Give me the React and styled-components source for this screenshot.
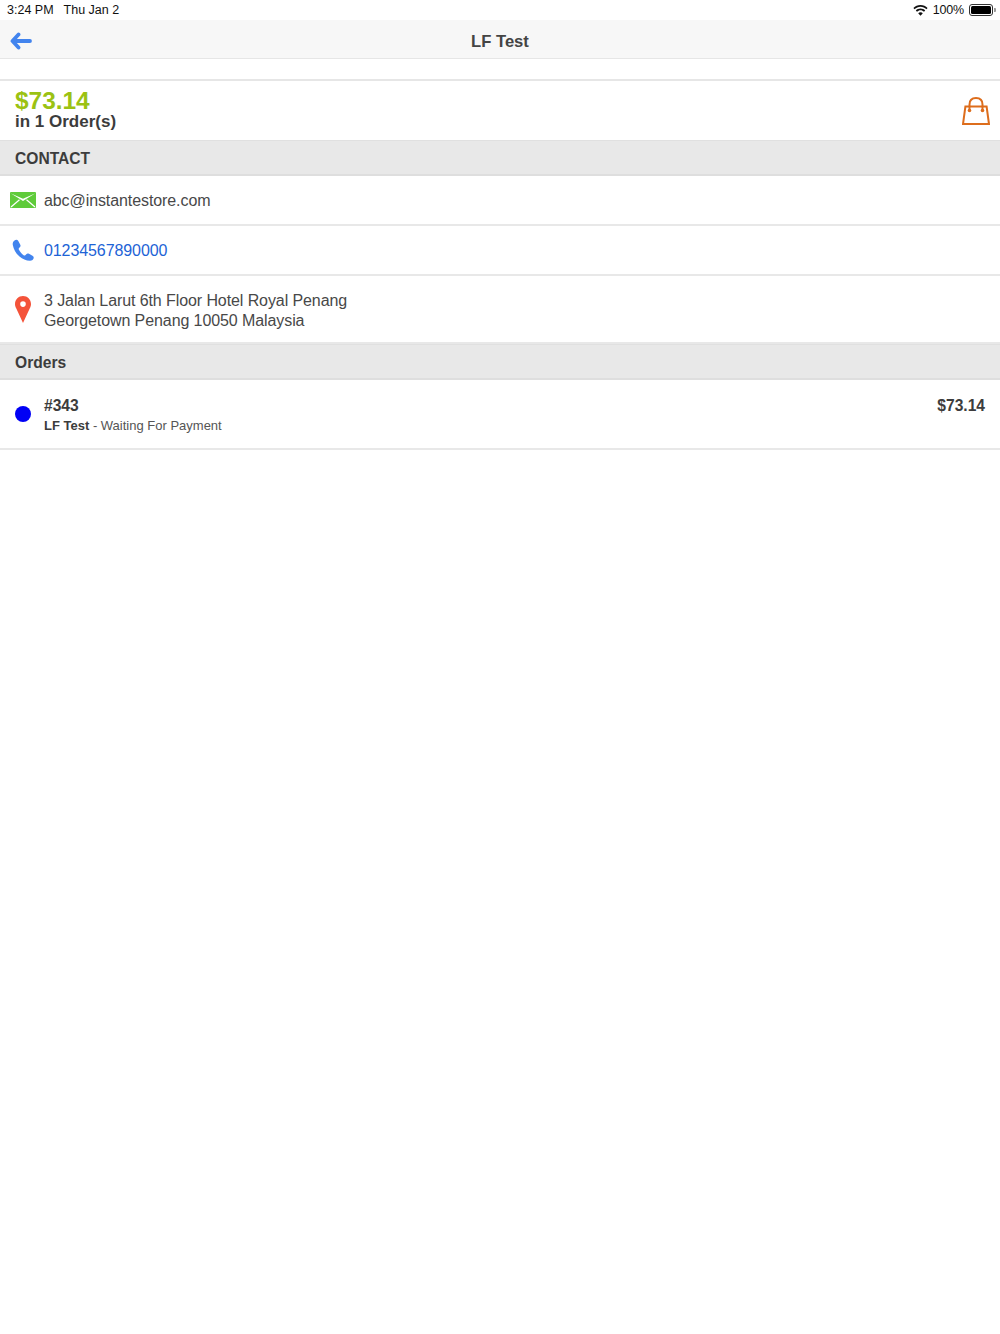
import React from "react";
import styled, { createGlobalStyle } from "styled-components";

const Global = createGlobalStyle`
  html, body { margin: 0; padding: 0; background: #fff; }
  body { font-family: "Liberation Sans", Arial, sans-serif; color: #3c3c3c; }
  * { box-sizing: border-box; }
`;

const Page = styled.div`
  width: 1000px;
  height: 1334px;
  background: #fff;
`;

const StatusBar = styled.div`
  height: 20px;
  padding: 0 6px 0 7px;
  display: flex;
  align-items: center;
  justify-content: space-between;
  font-size: 12.5px;
  color: #111;
`;

const StatusGroup = styled.div`
  display: flex;
  align-items: center;
  gap: ${({ $gap }) => $gap || 10}px;
`;

const BatteryLevel = styled.span`
  letter-spacing: -0.2px;
`;

const NavBar = styled.div`
  height: 39px;
  padding-top: 5px;
  background: #f7f7f7;
  border-bottom: 1px solid #e6e6e6;
  position: relative;
  display: flex;
  align-items: center;
  justify-content: center;
`;

const NavTitle = styled.div`
  font-size: 16.6px;
  font-weight: 700;
  color: #444;
`;

const BackButton = styled.div`
  position: absolute;
  left: 10px;
  top: 12px;
  display: flex;
`;

const Spacer = styled.div`
  height: 22px;
  border-bottom: 2px solid #e6e6e6;
`;

const Summary = styled.div`
  height: 59px;
  padding: 8px 10px 0 15px;
  display: flex;
  justify-content: space-between;
`;

const Amount = styled.div`
  font-size: 24.4px;
  line-height: 24px;
  font-weight: 700;
  color: #9bc213;
`;

const OrderCount = styled.div`
  font-size: 17px;
  line-height: 17px;
  font-weight: 700;
  color: #3c3c3c;
`;

const BagWrap = styled.div`
  padding-top: 8px;
`;

const Section = styled.div`
  height: 36px;
  padding: 3px 0 0 15px;
  background: #e8e8e8;
  border-top: 1px solid #e0e0e0;
  border-bottom: 2px solid #dedede;
  display: flex;
  align-items: center;
  font-size: 15.6px;
  font-weight: 700;
  color: #3c3c3c;
`;

const Row = styled.div`
  height: ${({ $h }) => $h}px;
  border-bottom: 2px solid #e8e8e8;
  display: flex;
  align-items: center;
`;

const IconCell = styled.div`
  width: 44px;
  flex: none;
  padding-left: ${({ $pad }) => $pad || 10}px;
  display: flex;
`;

const RowText = styled.div`
  font-size: 16px;
  line-height: 20px;
  padding-top: ${({ $top }) => $top || 1}px;
  letter-spacing: -0.09px;
  color: ${({ $link }) => ($link ? "#1d63d6" : "#484848")};
`;

const OrderBody = styled.div`
  flex: 1;
  padding: 2px 15px 0 0;
  display: flex;
  justify-content: space-between;
`;

const OrderId = styled.div`
  font-size: 15.6px;
  line-height: 20px;
  font-weight: 700;
  color: #3c3c3c;
`;

const OrderMeta = styled.div`
  font-size: 13px;
  line-height: 19px;
  color: #555;
  b { color: #3c3c3c; }
`;

const OrderTotal = styled.div`
  font-size: 15.6px;
  line-height: 20px;
  font-weight: 700;
  color: #3c3c3c;
`;

const StatusDot = styled.div`
  width: 16px;
  height: 16px;
  border-radius: 50%;
  background: #0000f5;
`;

const Battery = styled.div`
  width: 24px;
  height: 12px;
  border: 1px solid #333;
  border-radius: 3px;
  padding: 1px;
  margin-right: 1px;
  position: relative;
  display: flex;
  &::before {
    content: "";
    flex: 1;
    background: #000;
    border-radius: 1.5px;
  }
  &::after {
    content: "";
    position: absolute;
    right: -3.5px;
    top: 3px;
    width: 2px;
    height: 4px;
    background: #999;
    border-radius: 0 1px 1px 0;
  }
`;

const Wifi = () => (
  <svg width="15" height="11" viewBox="0 0 15 11">
    <path d="M7.5 0C4.7 0 2.2 1.1.4 2.9l1.2 1.3C3.1 2.7 5.2 1.8 7.5 1.8s4.4.9 5.9 2.4l1.2-1.3C12.8 1.1 10.3 0 7.5 0z" fill="#111" />
    <path d="M7.5 3.6c-1.8 0-3.5.7-4.7 1.9l1.2 1.3c.9-.9 2.2-1.5 3.5-1.5s2.6.6 3.5 1.5l1.2-1.3C11 4.3 9.3 3.6 7.5 3.6z" fill="#111" />
    <path d="M7.5 7.2c-.9 0-1.7.4-2.3 1l2.3 2.6 2.3-2.6c-.6-.6-1.4-1-2.3-1z" fill="#111" />
  </svg>
);

const BackArrow = () => (
  <svg width="22" height="18" viewBox="0 0 22 18">
    <path d="M8.500 2.500 2.500 9l6 6.500M3 9h17" fill="none" stroke="#4284ee" strokeWidth="3.800" strokeLinecap="round" strokeLinejoin="round" />
  </svg>
);

const Bag = () => (
  <svg width="28" height="28" viewBox="0 0 28 28">
    <path d="M3.400 9.500h21.200L27 27H1z" fill="none" stroke="#dd6d1c" strokeWidth="2" />
    <path d="M7.500 13V7.500C7.500 3.500 10 1 14 1s6.500 2.500 6.500 6.500V13" fill="none" stroke="#dd6d1c" strokeWidth="2" />
    <circle cx="7.500" cy="13.500" r="1.800" fill="#dd6d1c" />
    <circle cx="20.500" cy="13.500" r="1.800" fill="#dd6d1c" />
  </svg>
);

const Mail = () => (
  <svg width="26" height="16" viewBox="0 0 26 16">
    <rect width="26" height="16" rx="1" fill="#5fcb3a" />
    <path d="M1 1.500 13 9l12-7.500L13 6.800z" fill="#fff" />
    <path d="M1 15 9.500 7.800M25 15l-8.500-7.200" stroke="#fff" strokeWidth="1.200" />
  </svg>
);

const Phone = () => (
  <svg width="22" height="22" viewBox="0 0 22 22">
    <path d="M2.500 1.500C1 2.500.5 4 .8 6c.8 4.500 3.200 8.500 6.700 11.500 3 2.500 6.500 4.300 10.500 4.300 2 0 3.500-1.300 3.700-2.800.1-1-.4-1.700-1.200-2.200L17 14.800c-1-.5-2-.4-2.700.4l-1 1c-.5.4-1.100.4-1.700 0-2.100-1.400-3.800-3.400-4.800-5.600-.3-.7-.2-1.200.3-1.700L8 8c.6-.7.7-1.500.3-2.300l-2-3.800C5.500.6 3.800.6 2.500 1.500z" fill="#4284ee" />
  </svg>
);

const Pin = () => (
  <svg width="16" height="27" viewBox="0 0 16 27">
    <path fillRule="evenodd" d="M8 0C3.600 0 0 3.500 0 7.900c0 1.700.5 3.100 1.300 4.500L8 27l6.700-14.600c.8-1.400 1.300-2.800 1.300-4.500C16 3.500 12.400 0 8 0zm0 5.300a2.800 2.800 0 1 1 0 5.600 2.800 2.800 0 0 1 0-5.600z" fill="#f4533a" />
  </svg>
);

export default function App() {
  return (
    <Page>
      <Global />
      <StatusBar>
        <StatusGroup>
          <span>3:24 PM</span>
          <span>Thu Jan 2</span>
        </StatusGroup>
        <StatusGroup $gap={5}>
          <Wifi />
          <BatteryLevel>100%</BatteryLevel>
          <Battery />
        </StatusGroup>
      </StatusBar>
      <NavBar>
        <BackButton>
          <BackArrow />
        </BackButton>
        <NavTitle>LF Test</NavTitle>
      </NavBar>
      <Spacer />
      <Summary>
        <div>
          <Amount>$73.14</Amount>
          <OrderCount>in 1 Order(s)</OrderCount>
        </div>
        <BagWrap>
          <Bag />
        </BagWrap>
      </Summary>
      <Section>CONTACT</Section>
      <Row $h={50}>
        <IconCell>
          <Mail />
        </IconCell>
        <RowText>abc@instantestore.com</RowText>
      </Row>
      <Row $h={50}>
        <IconCell $pad={12}>
          <Phone />
        </IconCell>
        <RowText $link>01234567890000</RowText>
      </Row>
      <Row $h={68}>
        <IconCell $pad={15}>
          <Pin />
        </IconCell>
        <RowText $top={3}>
          3 Jalan Larut 6th Floor Hotel Royal Penang
          <br />
          Georgetown Penang 10050 Malaysia
        </RowText>
      </Row>
      <Section>Orders</Section>
      <Row $h={70}>
        <IconCell $pad={15}>
          <StatusDot />
        </IconCell>
        <OrderBody>
          <div>
            <OrderId>#343</OrderId>
            <OrderMeta>
              <b>LF Test</b> - Waiting For Payment
            </OrderMeta>
          </div>
          <OrderTotal>$73.14</OrderTotal>
        </OrderBody>
      </Row>
    </Page>
  );
}
